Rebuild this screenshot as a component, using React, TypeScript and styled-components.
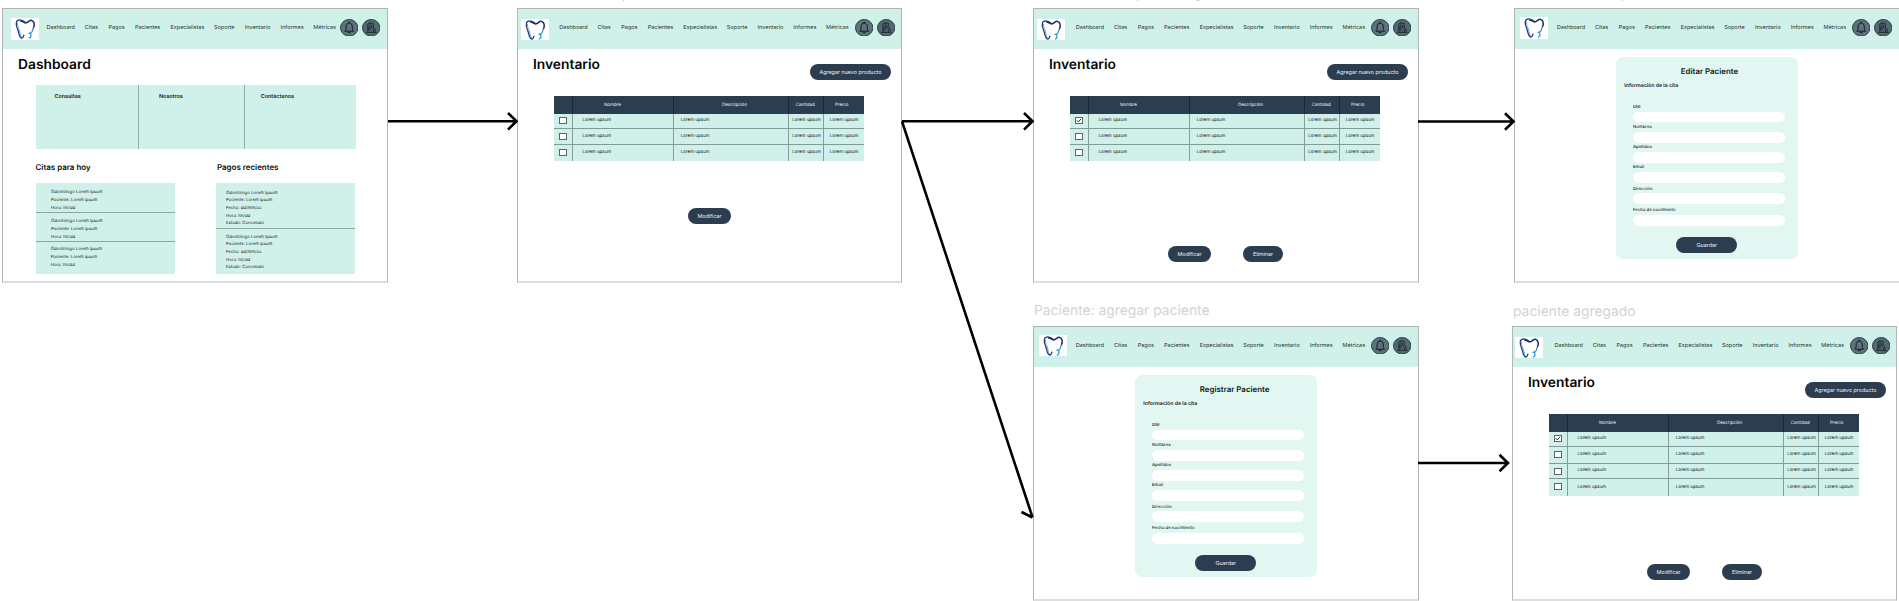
import React from "react";
import styled, { createGlobalStyle } from "styled-components";

const GlobalStyle = createGlobalStyle`
  * { box-sizing: border-box; }
  body { margin: 0; background: #fff; overflow: hidden; }
`;

const Board = styled.main`
  position: relative;
  width: 1899px;
  height: 601px;
  overflow: hidden;
  background: #fff;
  color: #17211f;
  font-family: Inter, "Liberation Sans", sans-serif;
  text-rendering: geometricPrecision;
`;

/* Frames, captions and arrows sit freely on the board. */
const Frame = styled.section<{ $x: number; $y: number; $w?: number; $h?: number }>`
  position: absolute;
  left: ${(p) => p.$x}px;
  top: ${(p) => p.$y}px;
  width: ${(p) => p.$w ?? 386}px;
  height: ${(p) => p.$h ?? 275}px;
  background: #fff;
  border: 1px solid #b1b5b4;
  border-bottom: 2px solid #dcdedd;
`;

const Caption = styled.div<{ $x: number; $y: number; $w: number }>`
  position: absolute;
  left: ${(p) => p.$x}px;
  top: ${(p) => p.$y}px;
  width: ${(p) => p.$w}px;
  font-size: 13.85px;
  line-height: 18px;
  color: #d3d3d3;
  white-space: nowrap;
`;

const ArrowLayer = styled.svg`
  position: absolute;
  inset: 0;
  pointer-events: none;
`;

const Header = styled.header<{ $nav: number }>`
  display: grid;
  grid-template-columns: ${(p) => p.$nav - 1}px ${(p) => 338 - p.$nav}px 18.6px 18.6px;
  height: 40px;
  background: #d0f1e9;
`;

const LogoBox = styled.div<{ $x: number; $y: number }>`
  width: 28px;
  height: 21.5px;
  margin: ${(p) => p.$y}px 0 0 ${(p) => p.$x - 1}px;
  background: #fff;
  svg { display: block; }
`;

const Nav = styled.nav`
  display: grid;
  grid-template-columns: 38.3px 23.7px 26.4px 35.6px 43.5px 30.8px 35.8px 32.7px 24px;
  margin-top: 15px;
  font-size: 5.5px;
  line-height: 8px;
  height: 8px;
  white-space: nowrap;
  color: #26332f;
`;

const RoundIcon = styled.div`
  width: 18.4px;
  height: 17.6px;
  margin-top: 9.5px;
  & + & { margin-left: 3.2px; }
  svg { display: block; }
`;

const TitleBar = styled.div`
  display: flex;
  justify-content: space-between;
  height: 47px;
  padding: 7px 10px 0 15px;
`;

const Title = styled.h1`
  margin: 0;
  font-size: 13.8px;
  line-height: 18px;
  font-weight: 600;
  color: #050807;
`;

const Button = styled.button<{ $w: number }>`
  width: ${(p) => p.$w}px;
  height: 16px;
  padding: 1px 0 0;
  border: 0;
  border-radius: 8px;
  background: #2d3d50;
  color: #e9eef2;
  font: 400 5.4px/15px Inter, "Liberation Sans", sans-serif;
  text-align: center;
`;

const AddButton = styled(Button)`
  margin-top: 8.4px;
`;

const Table = styled.div`
  width: 310px;
  margin-left: 35.5px;
  background: #d0f1e9;
`;

const Row = styled.div<{ $h: number; $line?: boolean }>`
  display: grid;
  grid-template-columns: 19px 101px 115px 35px 40px;
  height: ${(p) => p.$h}px;
  font-size: 4.45px;
  line-height: 6px;
  border-bottom: ${(p) => (p.$line ? "1px solid #829b96" : "0")};
`;

const HeadRow = styled(Row)`
  background: #2d3d50;
  color: #e3e9ee;
`;

const Cell = styled.div<{ $pad?: number; $top?: number }>`
  padding: ${(p) => p.$top ?? 3.5}px 0 0 ${(p) => p.$pad ?? 0}px;
  border-right: 1px solid #82a09a;
  white-space: nowrap;
  &:last-child { border-right: 0; }
`;

const HeadCell = styled(Cell)`
  border-right-color: #1d2835;
`;

const Check = styled.div`
  width: 8px;
  height: 7px;
  background: #fff;
  border: 1px solid #5c6664;
  svg { display: block; }
`;

const Actions = styled.div<{ $top: number; $left: number }>`
  display: flex;
  gap: 32px;
  margin: ${(p) => p.$top}px 0 0 ${(p) => p.$left}px;
`;

const Card = styled.form`
  width: 182px;
  height: 202px;
  margin: 8px 0 0 101px;
  padding: 8.2px 0 0 8.3px;
  background: #e2f7f2;
  border-radius: 7px;
`;

const CardTitle = styled.h2`
  margin: 0 0 0 56.5px;
  font-size: 7.9px;
  line-height: 12px;
  font-weight: 600;
  color: #101816;
  white-space: nowrap;
`;

const CardSub = styled.h3`
  margin: 6px 0 15px;
  font-size: 5.2px;
  line-height: 7px;
  font-weight: 600;
`;

const Field = styled.label<{ $h: number }>`
  display: block;
  height: ${(p) => p.$h}px;
  margin-left: 8.7px;
  font-size: 4.3px;
  line-height: 6px;
  font-weight: 500;
`;

const Input = styled.span<{ $gap: number }>`
  display: block;
  width: 152px;
  height: 10.7px;
  margin-top: ${(p) => p.$gap}px;
  border-radius: 5.4px;
  background: #fff;
`;

const SaveButton = styled(Button)`
  display: block;
  margin-left: 52px;
`;

const Summary = styled.div`
  display: grid;
  grid-template-columns: 103px 106px 111px;
  width: 320px;
  height: 64px;
  margin: -11px 0 0 33px;
  background: #d0f1e9;
`;

const SummaryItem = styled.div<{ $pad: number }>`
  padding: 8.6px 0 0 ${(p) => p.$pad}px;
  border-right: 1px solid #93aca6;
  font-size: 5.4px;
  line-height: 7px;
  font-weight: 600;
  &:last-child { border-right: 0; }
`;

const Lists = styled.div`
  display: grid;
  grid-template-columns: 139px 139px;
  column-gap: 41px;
  margin: 12px 0 0 33px;
`;

const ListTitle = styled.h2<{ $indent?: number }>`
  margin: 0 0 10px ${(p) => p.$indent ?? 0}px;
  font-size: 7.95px;
  line-height: 12px;
  font-weight: 600;
  color: #0a100e;
`;

const List = styled.div`
  background: #d0f1e9;
  height: 91.3px;
`;

const Entry = styled.div<{ $h: number; $top: number; $pad: number; $lh: number; $line?: boolean }>`
  height: ${(p) => p.$h}px;
  padding: ${(p) => p.$top}px 0 0 ${(p) => p.$pad}px;
  font-size: 4.3px;
  line-height: ${(p) => p.$lh}px;
  border-bottom: ${(p) => (p.$line ? "1px solid #8ca59f" : "0")};
`;

const NAV = ["Dashboard", "Citas", "Pagos", "Pacientes", "Expecialistas", "Soporte", "Inventario", "Informes", "Métricas"];

const Tooth = () => (
  <svg width="28" height="21.5" viewBox="0 0 28 21.5" fill="none" strokeLinecap="round" strokeLinejoin="round">
    <path d="M14 4.2C11 1.2 6.4.8 5.4 4.2 4.6 7 6 9.4 7 12.2c.8 2.4 1 5.3 2.6 7.2" stroke="#243a78" strokeWidth="1.3" />
    <path d="M9.6 3c2 0 3 1.8 4.9 1.9C17 5 18 2 20.6 2.4c3.2.6 3 4.8 1.9 7.4" stroke="#1c2b63" strokeWidth="1.5" />
    <path d="M22.5 9.8c-.6 1.6-1.2 3-1.6 4.4" stroke="#3c7fc0" strokeWidth="1.2" />
    <path d="M6.4 5.5C6.2 8.5 8 10.5 8.6 13c.5 2.2.6 4.4 2 6.2 1.1 1.3 2-.8 2.3-2.4" stroke="#58aee2" strokeWidth="1" />
    <path d="M12.8 17.4c-.4 1.9-1.5 3.3-2.6 2.3" stroke="#243a78" strokeWidth="1.2" />
    <path d="M18 15.3l2.3-.6M19.8 16v3M18.3 20l.8-.5" stroke="#2f9ad6" strokeWidth="1.3" />
  </svg>
);

const Bell = () => (
  <svg width="18.4" height="17.6" viewBox="0 0 18.4 17.6" fill="none">
    <ellipse cx="9.2" cy="8.8" rx="8.7" ry="8.3" fill="#5c737c" stroke="#2f4047" strokeWidth="1" />
    <path d="M4.8 12.2h8.8c-1.1-1.1-1.3-2-1.3-4.4 0-2.2-1.2-3.8-3.1-3.8S6.1 5.6 6.1 7.8c0 2.4-.2 3.3-1.3 4.4z" stroke="#11191c" strokeWidth="1" strokeLinejoin="round" />
    <path d="M8.2 13.7h2M9.2 3v1" stroke="#11191c" strokeWidth="1" strokeLinecap="round" />
  </svg>
);

const Clinic = () => (
  <svg width="18.4" height="17.6" viewBox="0 0 18.4 17.6" fill="none">
    <ellipse cx="9.2" cy="8.8" rx="8.7" ry="8.3" fill="#526972" stroke="#2f4047" strokeWidth="1" />
    <path d="M5.8 13V5.2L8 3.6V12M8 4.2h3.3v4M9.6 6v3M4 13.4h10.5" stroke="#1c282d" strokeWidth=".9" />
    <path d="M10 9.5l1.5-1 1.5 1.3.3 3.4M11.4 10v3M6.8 7.5v4" stroke="#1c282d" strokeWidth=".9" />
  </svg>
);

type BarProps = { logo: number; logoY: number; nav: number };

const TopBar = ({ logo, logoY, nav }: BarProps) => (
  <Header $nav={nav}>
    <LogoBox $x={logo} $y={logoY}><Tooth /></LogoBox>
    <Nav>{NAV.map((n) => <span key={n}>{n}</span>)}</Nav>
    <RoundIcon><Bell /></RoundIcon>
    <RoundIcon><Clinic /></RoundIcon>
  </Header>
);

const Mark = ({ checked }: { checked?: boolean }) => (
  <Check>
    {checked && (
      <svg width="6" height="5" viewBox="0 0 6 5"><path d="M1 2.4l1.4 1.5L5 .9" fill="none" stroke="#111" strokeWidth=".9" /></svg>
    )}
  </Check>
);

const InventoryTable = ({ heights, checked }: { heights: number[]; checked?: boolean }) => (
  <Table>
    <HeadRow $h={17.5}>
      <HeadCell />
      <HeadCell $pad={31.5} $top={6.8}>Nombre</HeadCell>
      <HeadCell $pad={48.5} $top={6.8}>Descripción</HeadCell>
      <HeadCell $pad={7.3} $top={6.8}>Cantidad</HeadCell>
      <HeadCell $pad={11.5} $top={6.8}>Precio</HeadCell>
    </HeadRow>
    {heights.map((h, i) => {
      const top = i < 2 ? 4.8 : h - 10.8;
      return (
        <Row key={i} $h={h} $line={i < heights.length - 1}>
          <Cell $pad={5.5} $top={i === 0 ? 3.5 : 4.2}><Mark checked={checked && i === 0} /></Cell>
          <Cell $pad={10} $top={top}>Lorem upsum</Cell>
          <Cell $pad={7.3} $top={top}>Lorem upsum</Cell>
          <Cell $pad={3.7} $top={top}>Lorem upsum</Cell>
          <Cell $pad={6.3} $top={top}>Lorem upsum</Cell>
        </Row>
      );
    })}
  </Table>
);

type InventoryProps = BarProps & { x: number; y: number; w?: number; heights: number[]; checked?: boolean; top: number; left: number; remove?: boolean };

const InventoryFrame = ({ x, y, w, heights, checked, top, left, remove, ...bar }: InventoryProps) => (
  <Frame $x={x} $y={y} $w={w}>
    <TopBar {...bar} />
    <TitleBar>
      <Title>Inventario</Title>
      <AddButton $w={81}>Agregar nuevo producto</AddButton>
    </TitleBar>
    <InventoryTable heights={heights} checked={checked} />
    <Actions $top={top} $left={left}>
      <Button $w={43}>Modificar</Button>
      {remove && <Button $w={40}>Eliminar</Button>}
    </Actions>
  </Frame>
);

const FIELDS: [string, number, number][] = [
  ["DNI", 20.1, 0.6],
  ["Nombres", 20.1, 0.6],
  ["Apellidos", 20.1, 0.6],
  ["Email", 21.2, 0.6],
  ["Dirección", 21.6, 0.8],
  ["Fecha de nacimiento", 28.5, 0.8],
];

const FormFrame = ({ x, y, title, ...bar }: BarProps & { x: number; y: number; title: string }) => (
  <Frame $x={x} $y={y}>
    <TopBar {...bar} />
    <Card>
      <CardTitle>{title}</CardTitle>
      <CardSub>Información de la cita</CardSub>
      {FIELDS.map(([name, height, gap]) => (
        <Field key={name} $h={height}>{name}<Input $gap={gap} /></Field>
      ))}
      <SaveButton type="button" $w={61}>Guardar</SaveButton>
    </Card>
  </Frame>
);

const Visit = () => (<>Odontólogo Lorem Ipsum<br />Paciente: Lorem ipsum<br />Hora: hh/dd</>);
const Payment = () => (<>Odontólogo Lorem Ipsum<br />Paciente: Lorem ipsum<br />Fecha: dd/mm/aa<br />Hora: hh/dd<br />Estado: Cancelado</>);

const DashboardFrame = () => (
  <Frame $x={2} $y={8}>
    <TopBar logo={9.3} logoY={9} nav={44.5} />
    <TitleBar><Title>Dashboard</Title></TitleBar>
    <Summary>
      <SummaryItem $pad={18.5}>Consultas</SummaryItem>
      <SummaryItem $pad={20}>Nosotros</SummaryItem>
      <SummaryItem $pad={15.7}>Contáctanos</SummaryItem>
    </Summary>
    <Lists>
      <div>
        <ListTitle $indent={-0.5}>Citas para hoy</ListTitle>
        <List>
          <Entry $h={29.5} $top={6.1} $pad={15} $lh={8} $line><Visit /></Entry>
          <Entry $h={29} $top={5} $pad={15} $lh={8} $line><Visit /></Entry>
          <Entry $h={32} $top={4.7} $pad={14.7} $lh={8}><Visit /></Entry>
        </List>
      </div>
      <div>
        <ListTitle $indent={1}>Pagos recientes</ListTitle>
        <List>
          <Entry $h={46} $top={6.9} $pad={10} $lh={7.6} $line><Payment /></Entry>
          <Entry $h={45} $top={4.8} $pad={10} $lh={7.6}><Payment /></Entry>
        </List>
      </div>
    </Lists>
  </Frame>
);

export default function App() {
  return (
    <>
      <GlobalStyle />
      <Board>
        <DashboardFrame />
        <InventoryFrame x={517} y={8} w={385} logo={3.5} logoY={9.5} nav={42.3} heights={[15.3, 16, 16.5]} top={46.7} left={170} />
        <InventoryFrame x={1033} y={8} logo={4} logoY={9.5} nav={42.7} heights={[15.3, 16, 16.5]} checked top={84.5} left={134} remove />
        <FormFrame x={1514} y={8} logo={6} logoY={8} nav={42.7} title="Editar Paciente" />
        <Caption $x={1034} $y={302} $w={180}>Paciente: agregar paciente</Caption>
        <Caption $x={1513} $y={303} $w={130}>paciente agregado</Caption>
        <FormFrame x={1033} y={326} logo={6} logoY={7.5} nav={42.7} title="Registrar Paciente" />
        <InventoryFrame x={1512} y={326} w={385} logo={3.3} logoY={9.5} nav={42.5} heights={[15.5, 16.5, 15.3, 17.3]} checked top={68} left={134} remove />
        <ArrowLayer width="1899" height="601" fill="none" stroke="#000" strokeWidth="2.6">
          <path d="M388 121.3H516M508 113l8.5 8.3-8.5 8.3" />
          <path d="M902 121.3h130M1024 113l8.5 8.3-8.5 8.3" />
          <path d="M902 121.3l130.5 396M1021.5 512l11 5.5" />
          <path d="M1418 121.5h95M1505 113.3l8.5 8.2-8.5 8.3" />
          <path d="M1418 463h89M1499.5 454.7l8.5 8.3-8.5 8.3" />
          <path d="M623.5 0v1.5M1137.5 0v1M1196.5 .5h3M1622.3 0v1" stroke="#d0d0d0" strokeWidth="1.2" />
        </ArrowLayer>
      </Board>
    </>
  );
}
